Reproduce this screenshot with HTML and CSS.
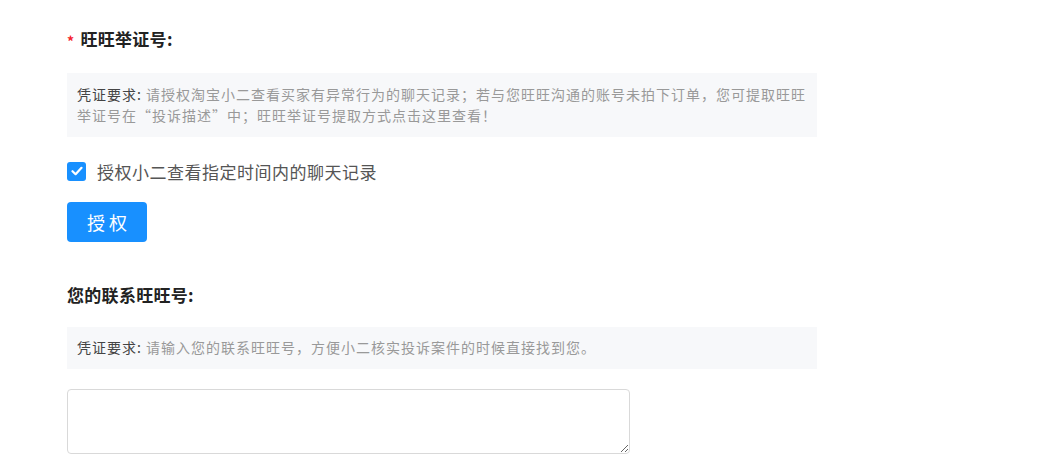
FILE: index.html
```html
<!DOCTYPE html>
<html lang="zh-CN">
<head>
<meta charset="utf-8">
<title>举证</title>
<link rel="stylesheet" href="styles.css">
</head>
<body>
<div class="form">
  <h3 class="title title-first"><span class="req">*</span>旺旺举证号:</h3>
  <div class="tip"><span class="tip-label">凭证要求:</span> 请授权淘宝小二查看买家有异常行为的聊天记录；若与您旺旺沟通的账号未拍下订单，您可提取旺旺举证号在“投诉描述”中；旺旺举证号提取方式点击这里查看！</div>
  <label class="check">
    <span class="box"><svg width="12" height="10" viewBox="0 0 12 10"><path d="M1.5 5.2 L4.6 8.2 L10.5 1.8" fill="none" stroke="#fff" stroke-width="2.2" stroke-linecap="round" stroke-linejoin="round"/></svg></span>
    <span class="check-text">授权小二查看指定时间内的聊天记录</span>
  </label>
  <button class="btn" type="button">授权</button>

  <h3 class="title title-second">您的联系旺旺号:</h3>
  <div class="tip tip-single"><span class="tip-label">凭证要求:</span> 请输入您的联系旺旺号，方便小二核实投诉案件的时候直接找到您。</div>
  <textarea class="input"></textarea>
</div>
</body>
</html>
```

FILE: styles.css
```css
html, body {
  margin: 0;
  padding: 0;
  background: #fff;
}
body {
  font-family: "Noto Sans CJK SC", "Noto Sans", sans-serif;
  color: #333;
}
.form {
  padding-left: 67px;
  display: flex;
  flex-direction: column;
  align-items: flex-start;
}
.title {
  margin: 0;
  font-size: 17px;
  line-height: 24px;
  font-weight: 700;
  color: #222;
  display: flex;
  align-items: center;
  letter-spacing: 0.3px;
}
.title-first { margin-top: 27px; }
.title-second { margin-top: 41px; }
.req {
  color: #f5222d;
  font-size: 14px;
  margin-right: 6px;
  position: relative;
  top: 2px;
}
.tip {
  box-sizing: border-box;
  width: 750px;
  margin-top: 22px;
  padding: 11px 8px 11px 10px;
  background: #f7f8fa;
  font-size: 14px;
  line-height: 21px;
  letter-spacing: 1px;
  color: #999;
}
.tip-single {
  margin-top: 20px;
  padding-top: 10px;
  padding-bottom: 11px;
}
.tip-label {
  color: #444;
}
.check {
  margin-top: 22px;
  display: flex;
  align-items: center;
  height: 24px;
}
.box {
  width: 19px;
  height: 19px;
  border-radius: 3px;
  background: #1890ff;
  display: flex;
  align-items: center;
  justify-content: center;
  margin-right: 11px;
}
.check-text {
  font-size: 17px;
  letter-spacing: 0.5px;
  color: #555;
}
.btn {
  margin-top: 19px;
  width: 80px;
  height: 40px;
  border: 0;
  border-radius: 4px;
  background: #1890ff;
  color: #fff;
  font-family: inherit;
  font-size: 18px;
  letter-spacing: 4px;
  padding: 0 0 0 4px;
}
.input {
  margin-top: 20px;
  box-sizing: border-box;
  width: 563px;
  height: 65px;
  border: 1px solid #d9d9d9;
  border-radius: 4px;
  font-family: inherit;
}
```
